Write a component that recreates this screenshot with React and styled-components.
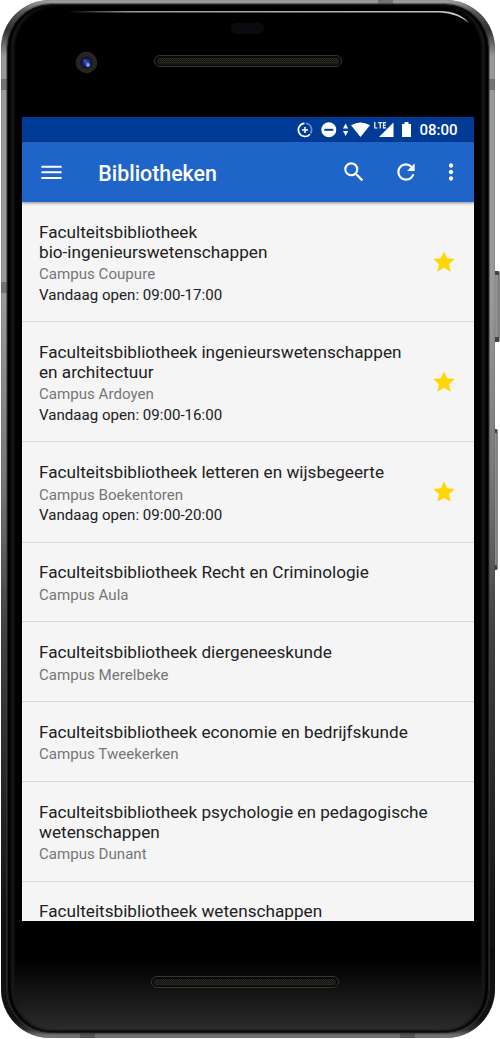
import React from "react";
import styled, { createGlobalStyle } from "styled-components";

const Global = createGlobalStyle`
  *, *::before, *::after { box-sizing: border-box; }
  body { margin: 0; background: #fff; font-family: Roboto, "Liberation Sans", sans-serif; }
`;

const Stage = styled.div`
  position: relative;
  width: 500px;
  height: 1039px;
  overflow: hidden;
`;

const SideButton = styled.div`
  position: absolute;
  left: 492px;
  top: ${(p) => p.$top}px;
  width: ${(p) => p.$width}px;
  height: ${(p) => p.$height}px;
  border-radius: 1px 2px 2px 1px;
  border: solid #444;
  border-width: 4px 1px 5px 0;
  border-right-color: #888;
  background: linear-gradient(90deg, #555, #999 60%, #777);
`;

const Shell = styled.div`
  position: relative;
  width: 494px;
  height: 1038px;
  margin-left: 1px;
  border-radius: 49px;
  padding: 4px 6px 5px;
  overflow: hidden;
  background: linear-gradient(180deg, #a5a8a6 0, #555 12px, #333 30px, #999 56px, #999 300px, #777 480px, #444 620px, #2c2f2e 750px, #111 930px, #111 1020px, #333 1030px, #777 1036px);
  box-shadow: inset 0 0 1px rgba(0, 0, 0, 0.8);
`;

const Band = styled.div`
  position: absolute;
  background: #000;
  opacity: 0.25;
  left: ${(p) => p.$x}px;
  top: ${(p) => p.$y}px;
  width: ${(p) => (p.$tall ? 7 : 15)}px;
  height: ${(p) => (p.$tall ? 11 : 7)}px;
`;

const Glass = styled.div`
  position: relative;
  height: 100%;
  border: 1px solid #1b1b1b;
  border-radius: 44px;
  padding: 112px 14px 0;
  background: linear-gradient(180deg, #000 0, #000 955px, #121212 985px, #2b2b2b 1024px, #080808 1028px);
  box-shadow:
    0 0 0 1px rgba(60, 60, 60, 0.55),
    inset 3px 0 2px #000,
    inset -3px 0 2px #000,
    inset 6px 0 3px #1c1c1c,
    inset -6px 0 3px #1c1c1c;
`;

const Overlay = styled.svg`
  position: absolute;
  left: 0;
  top: 0;
  pointer-events: none;
`;

const Screen = styled.main`
  height: 804px;
  overflow: hidden;
  background: #f5f5f5;
  display: flex;
  flex-direction: column;
`;

const StatusBar = styled.div`
  flex: none;
  height: 25px;
  background: #003c96;
  color: #fff;
  display: flex;
  justify-content: flex-end;
  align-items: center;
  padding-right: 16.5px;
`;

const StatusIcons = styled.svg`
  flex: none;
  margin-right: 6px;
`;

const Clock = styled.span`
  font-size: 15px;
  font-weight: 500;
  line-height: 26px;
  padding-top: 1px;
`;

const AppBar = styled.header`
  flex: none;
  position: relative;
  height: 60px;
  background: #1f64c8;
  color: #fff;
  display: flex;
  align-items: center;
  padding: 0 10.4px 0 16px;
  box-shadow: 0 1px 3px rgba(0, 0, 0, 0.45);
`;

const AppTitle = styled.h1`
  flex: 1;
  margin: 0 0 0 33.3px;
  font-size: 21.35px;
  font-weight: 500;
  line-height: 30px;
  padding-top: 3px;
`;

const Icon = styled.svg`
  flex: none;
  display: block;
  fill: currentColor;
  margin-left: ${(p) => p.$gap || 0}px;
`;

const List = styled.ul`
  margin: 0;
  padding: 0;
  list-style: none;
`;

const Row = styled.li`
  display: flex;
  align-items: center;
  padding: 19.2px 17px;
  border-bottom: 1.2px solid #d9d9d9;
`;

const Info = styled.div`
  flex: 1;
  white-space: nowrap;
  position: relative;
  top: 0.5px;
`;

const Name = styled.div`
  font-size: 17.18px;
  line-height: 20px;
  color: #212121;
`;

const Meta = styled.div`
  font-size: 15.1px;
  line-height: 20.4px;
  color: ${(p) => (p.$dark ? "#212121" : "#757575")};
  position: relative;
  top: 2.5px;
`;

const Star = styled(Icon)`
  fill: #ffd600;
`;

const libraries = [
  { name: ["Faculteitsbibliotheek", "bio-ingenieurswetenschappen"], campus: "Campus Coupure", open: "09:00-17:00" },
  { name: ["Faculteitsbibliotheek ingenieurswetenschappen", "en architectuur"], campus: "Campus Ardoyen", open: "09:00-16:00" },
  { name: ["Faculteitsbibliotheek letteren en wijsbegeerte"], campus: "Campus Boekentoren", open: "09:00-20:00" },
  { name: ["Faculteitsbibliotheek Recht en Criminologie"], campus: "Campus Aula" },
  { name: ["Faculteitsbibliotheek diergeneeskunde"], campus: "Campus Merelbeke" },
  { name: ["Faculteitsbibliotheek economie en bedrijfskunde"], campus: "Campus Tweekerken" },
  { name: ["Faculteitsbibliotheek psychologie en pedagogische", "wetenschappen"], campus: "Campus Dunant" },
  { name: ["Faculteitsbibliotheek wetenschappen"] },
];

function Hardware() {
  return (
    <Overlay width="494" height="1038" viewBox="1 0 494 1038">
      <defs>
        <linearGradient id="shine" x1="0" x2="1">
          <stop offset="0" stopColor="#999" stopOpacity="0" />
          <stop offset="0.15" stopColor="#999" />
          <stop offset="1" stopColor="#c4c8c8" />
        </linearGradient>
        <pattern id="mesh" width="2" height="2" patternUnits="userSpaceOnUse">
          <rect width="2" height="2" fill="#15140f" />
          <rect width="1" height="1" fill="#34322c" />
          <rect x="1" y="1" width="1" height="1" fill="#24221d" />
        </pattern>
        <radialGradient id="lens">
          <stop offset="0" stopColor="#4a5cc0" />
          <stop offset="0.5" stopColor="#20286e" />
          <stop offset="1" stopColor="#080a1c" />
        </radialGradient>
      </defs>
      <path d="M68 11H440Q459 11 469 23Q457 13.500 440 12.500H68Z" fill="url(#shine)" />
      <rect x="231" y="23" width="33" height="11" rx="5.500" fill="#0a0b10" />
      <circle cx="86.500" cy="62.500" r="10.700" fill="#252525" />
      <circle cx="86.500" cy="62.500" r="6" fill="url(#lens)" />
      <circle cx="88" cy="65" r="2" fill="#8494f4" />
      <circle cx="84.500" cy="60.500" r="1" fill="#5563c0" />
      <rect x="154.500" y="55.500" width="187" height="11" rx="5.500" fill="#080808" stroke="#363633" />
      <rect x="157" y="58" width="182" height="6.500" rx="3" fill="url(#mesh)" />
      <rect x="151.500" y="976.500" width="187" height="11" rx="5.500" fill="#080808" stroke="#363633" />
      <rect x="154" y="979" width="182" height="6.500" rx="3" fill="url(#mesh)" />
    </Overlay>
  );
}

function Status() {
  return (
    <StatusBar>
      <StatusIcons width="116" height="20" viewBox="297 120 116 20" fill="#fff">
        <path d="M304.500 123.300A6.600 6.600 0 1 0 310 134.200" fill="none" stroke="#fff" strokeWidth="1.700" />
        <path d="M306 123.300A6.600 6.600 0 0 1 310.500 133.500" fill="none" stroke="#6d90c4" strokeWidth="1.600" />
        <path d="M305 127v6M302 130h6" stroke="#fff" strokeWidth="1.600" />
        <circle cx="328.800" cy="129.800" r="7.500" />
        <rect x="324.300" y="128.800" width="9" height="2" fill="#003c96" />
        <path d="M343 128.500l2.600-5 2.600 5zM343 131l2.600 5 2.600-5z" />
        <path d="M351 125.300Q360.500 119.500 370 125.300L360.500 137Z" />
        <path d="M393.500 122.500V137H379Z" />
        <path d="M373.500 121H385V129H373.500Z" fill="#003c96" />
        <path d="M374.800 122v6h2.700M378.200 122.600h4M380.200 122.600v6M386 122.600h-2.500v5.300h2.500M383.500 125.200h2.200" fill="none" stroke="#fff" strokeWidth="1.200" />
        <path d="M402 124h2.500v-2h4v2h2.500v13H402Z" />
      </StatusIcons>
      <Clock>08:00</Clock>
    </StatusBar>
  );
}

export default function App() {
  return (
    <>
      <Global />
      <Stage>
        <SideButton $top={271} $height={71} $width={8} />
        <SideButton $top={429} $height={141} $width={6} />
        <Shell>
          <Band $x={0} $y={79} $tall />
          <Band $x={487} $y={79} $tall />
          <Band $x={0} $y={282} $tall />
          <Band $x={487} $y={948} $tall />
          <Band $x={377} $y={0} />
          <Band $x={79} $y={1032} />
          <Band $x={399} $y={1032} />
          <Glass>
            <Screen>
              <Status />
              <AppBar>
                <Icon width="27" height="27" viewBox="0 0 24 24"><path d="M3 17.700h18v-1.800H3v1.800zm0-5h18v-1.800H3v1.800zm0-6.800v1.800h18V5.900H3z" /></Icon>
                <AppTitle>Bibliotheken</AppTitle>
                <Icon width="26" height="26" viewBox="0 0 24 24"><path d="M15.500 14h-.79l-.28-.27A6.471 6.471 0 0 0 16 9.500 6.500 6.500 0 1 0 9.500 16c1.610 0 3.090-.59 4.230-1.570l.27.28v.79l5 4.990L20.490 19l-4.990-5zm-6 0C7.010 14 5 11.990 5 9.500S7.010 5 9.500 5 14 7.010 14 9.500 11.990 14 9.500 14z" /></Icon>
                <Icon $gap={26} width="26" height="26" viewBox="0 0 24 24"><path d="M17.650 6.350A7.958 7.958 0 0 0 12 4c-4.420 0-7.990 3.580-7.990 8s3.570 8 7.990 8c3.730 0 6.840-2.550 7.730-6h-2.080A5.990 5.990 0 0 1 12 18c-3.310 0-6-2.690-6-6s2.690-6 6-6c1.660 0 3.140.69 4.220 1.780L13 11h7V4l-2.350 2.350z" /></Icon>
                <Icon $gap={19} width="26" height="26" viewBox="0 0 24 24"><path d="M12 8c1.100 0 2-.9 2-2s-.9-2-2-2-2 .9-2 2 .9 2 2 2zm0 2c-1.100 0-2 .9-2 2s.9 2 2 2 2-.9 2-2-.9-2-2-2zm0 6c-1.100 0-2 .9-2 2s.9 2 2 2 2-.9 2-2-.9-2-2-2z" /></Icon>
              </AppBar>
              <List>
                {libraries.map((lib) => (
                  <Row key={lib.name.join(" ")}>
                    <Info>
                      {lib.name.map((line) => <Name key={line}>{line}</Name>)}
                      {lib.campus && <Meta>{lib.campus}</Meta>}
                      {lib.open && <Meta $dark>Vandaag open: {lib.open}</Meta>}
                    </Info>
                    {lib.open && (
                      <Star width="26" height="26" viewBox="0 0 24 24"><path d="M12 17.270L18.180 21l-1.640-7.030L22 9.240l-7.190-.61L12 2 9.190 8.630 2 9.240l5.460 4.730L5.820 21z" /></Star>
                    )}
                  </Row>
                ))}
              </List>
            </Screen>
          </Glass>
          <Hardware />
        </Shell>
      </Stage>
    </>
  );
}
